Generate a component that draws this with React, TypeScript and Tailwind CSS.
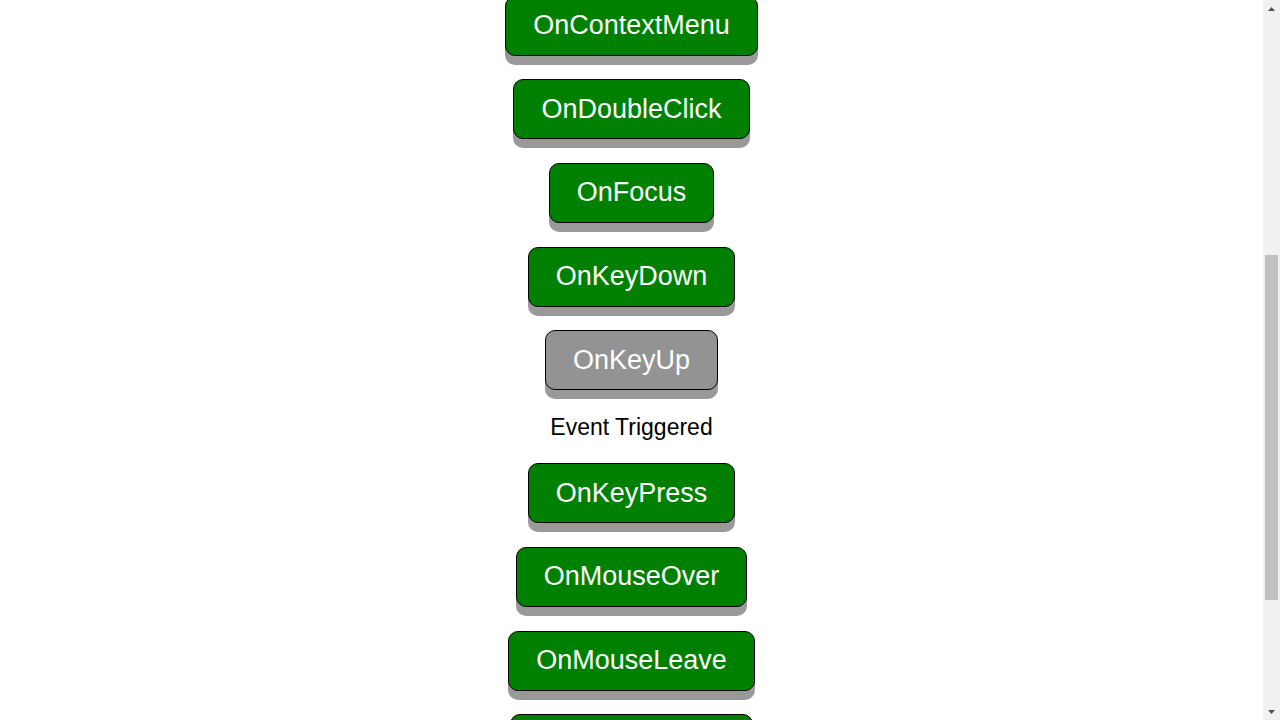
import { useLayoutEffect, useRef } from "react";

const events = [
  "OnBlur",
  "OnChange",
  "OnClick",
  "OnContextMenu",
  "OnDoubleClick",
  "OnFocus",
  "OnKeyDown",
  "OnKeyUp",
  "OnKeyPress",
  "OnMouseOver",
  "OnMouseLeave",
  "OnMouseDown",
  "OnMouseUp",
];

const triggered = "OnKeyUp";

function EventButton({ label, active }: { label: string; active: boolean }) {
  return (
    <button
      className={`rounded-[10px] border border-black px-[27px] py-[13.5px] text-[27px] leading-[31px] text-white shadow-[0_9px_#999] ${
        active ? "bg-[#939393]" : "bg-[#008000]"
      }`}
    >
      {label}
    </button>
  );
}

function Scrollbar() {
  return (
    <div className="flex h-screen w-[17px] shrink-0 flex-col bg-[#f1f1f1]">
      <div className="flex h-[17px] items-center justify-center">
        <svg width="7" height="4" viewBox="0 0 7 4">
          <path d="M3.5 0 L7 4 L0 4 Z" fill="#505050" />
        </svg>
      </div>
      <div className="flex-1 px-[2px]">
        <div className="mt-[238px] h-[345px] bg-[#c1c1c1]" />
      </div>
      <div className="flex h-[17px] items-center justify-center">
        <svg width="7" height="4" viewBox="0 0 7 4">
          <path d="M0 0 L7 0 L3.5 4 Z" fill="#505050" />
        </svg>
      </div>
    </div>
  );
}

export default function App() {
  const scroller = useRef<HTMLDivElement>(null);
  const anchor = useRef<HTMLDivElement>(null);

  useLayoutEffect(() => {
    const el = scroller.current;
    const a = anchor.current;
    if (!el || !a) return;
    const top = a.getBoundingClientRect().top - el.getBoundingClientRect().top;
    el.scrollTop = Math.round(top) + 4;
  }, []);

  return (
    <div className="flex h-screen overflow-hidden bg-white font-['Liberation_Sans',Arial,sans-serif] text-black">
      <div ref={scroller} className="h-screen flex-1 overflow-hidden">
        <div className="flex flex-col items-center pb-[80px]">
          <h1 className="mt-[40px] text-[36px] font-bold leading-[42px] text-[#008000]">GeeksforGeeks</h1>
          <h3 className="mt-[20px] mb-[40px] text-[22px] font-bold leading-[26px]">React Event Handlers</h3>
          <div className="flex flex-col items-center gap-[23.6px]">
            {events.map((e) => (
              <div
                key={e}
                ref={e === "OnContextMenu" ? anchor : undefined}
                className="flex flex-col items-center gap-[23.6px]"
              >
                <EventButton label={e} active={e === triggered} />
                {e === triggered && <p className="text-[23px] leading-[26px]">Event Triggered</p>}
              </div>
            ))}
          </div>
        </div>
      </div>
      <Scrollbar />
    </div>
  );
}
